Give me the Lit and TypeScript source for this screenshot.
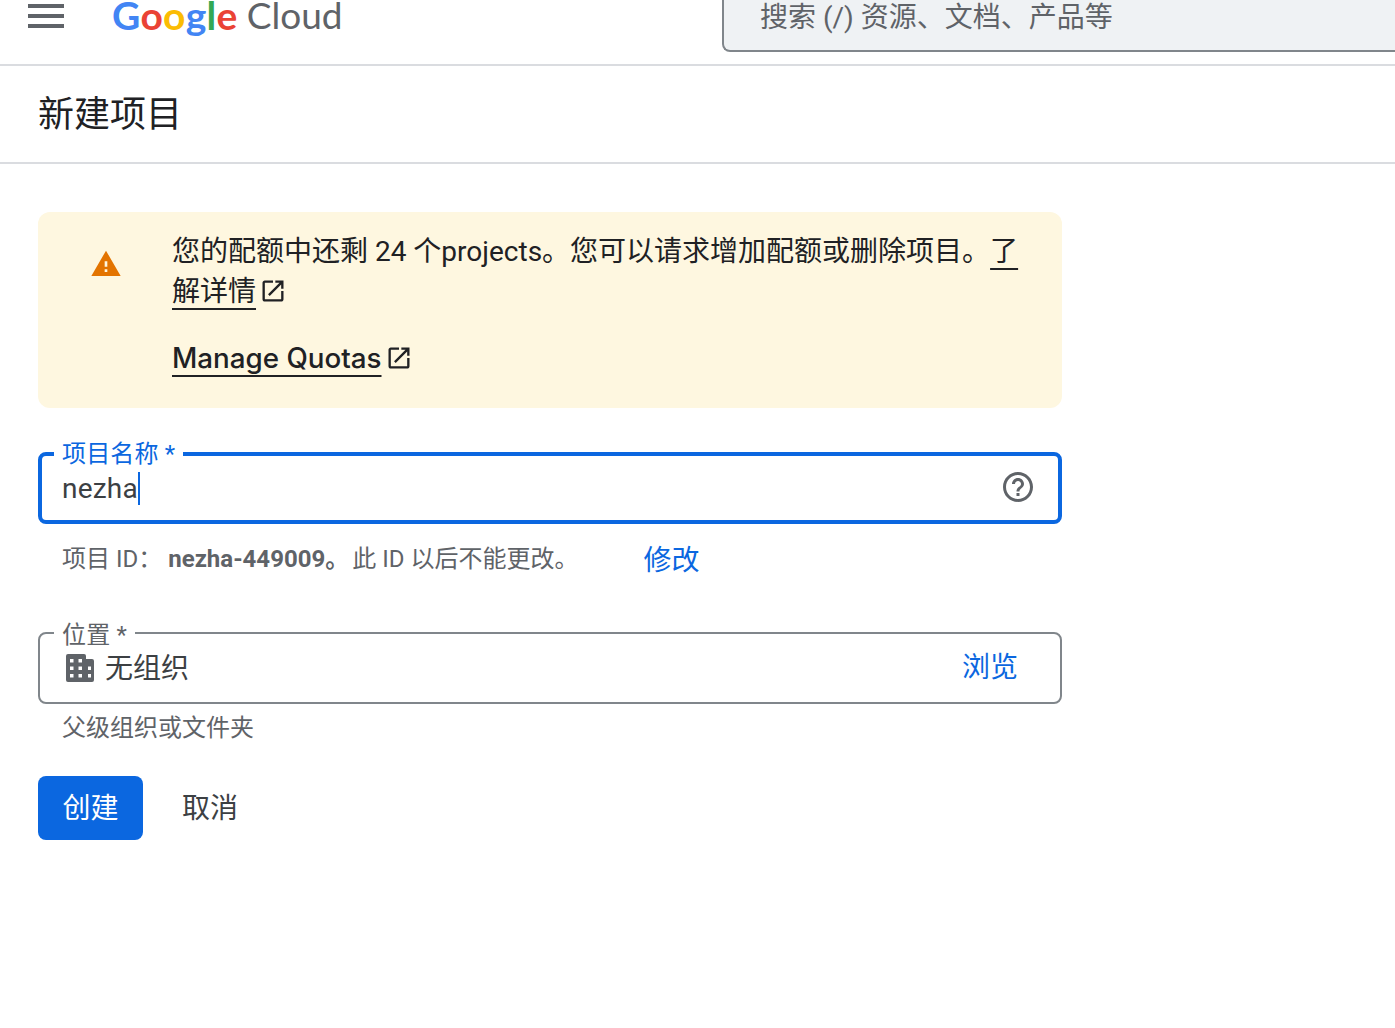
import { LitElement, html, css, svg } from 'lit';
import { customElement } from 'lit/decorators.js';

const openNew = svg`<path d="M19 19H5V5h7V3H5c-1.11 0-2 .9-2 2v14c0 1.1.89 2 2 2h14c1.1 0 2-.9 2-2v-7h-2v7zM14 3v2h3.59l-9.83 9.83 1.41 1.41L19 6.41V10h2V3h-7z"/>`;

@customElement('app-root')
export class AppRoot extends LitElement {
  static styles = css`
    :host {
      display: block;
      min-height: 1028px;
      background: #fff;
      overflow: hidden;
      font-family: Roboto, "Noto Sans CJK SC", sans-serif;
      color: #202124;
    }
    svg {
      display: block;
      fill: currentColor;
      flex: none;
    }
    header {
      display: flex;
      height: 64px;
      border-bottom: 2px solid #dadce0;
      overflow: hidden;
    }
    .menu {
      display: flex;
      flex-direction: column;
      gap: 6px;
      width: 36px;
      margin: 4px 0 0 28px;
    }
    .menu i {
      display: block;
      height: 4px;
      background: #5f6368;
    }
    .logo {
      display: flex;
      gap: 9px;
      width: 610px;
      margin: -11px 0 0 48px;
      font-family: Lato, sans-serif;
      font-size: 39px;
      line-height: 52px;
    }
    .logo .word {
      font-weight: 700;
      letter-spacing: 0.3px;
    }
    .logo .cloud {
      color: #5f6368;
      font-size: 37px;
    }
    .b { color: #4285f4; }
    .r { color: #ea4335; }
    .y { color: #fbbc04; }
    .g { color: #34a853; }
    .search {
      flex: 1;
      height: 62px;
      margin-top: -10px;
      padding-left: 36px;
      box-sizing: border-box;
      background: #eff2f4;
      border: 2px solid #80868b;
      border-radius: 8px 0 0 8px;
      border-right: 0;
      color: #5f6368;
      font-size: 28px;
      line-height: 52px;
    }
    .title {
      height: 96px;
      padding-left: 38px;
      border-bottom: 2px solid #dadce0;
      font-size: 36px;
      line-height: 98px;
    }
    main {
      width: 1024px;
      margin: 48px 0 0 38px;
    }
    .banner {
      display: flex;
      gap: 50px;
      height: 196px;
      box-sizing: border-box;
      padding: 20px 40px 0 52px;
      background: #fef7e0;
      border-radius: 12px;
      font-size: 28px;
      line-height: 40px;
    }
    .banner .warn {
      margin-top: 16px;
      color: #e37400;
    }
    .banner p {
      margin: 0 0 26px;
    }
    .link {
      text-decoration: underline;
      text-decoration-thickness: 2px;
      text-underline-offset: 7px;
      text-decoration-skip-ink: none;
    }
    .ext {
      display: inline-block;
      vertical-align: -4px;
      margin-left: 3px;
    }
    .quotas {
      font-family: Inter, sans-serif;
      font-weight: 500;
      font-size: 27.75px;
    }
    .field {
      position: relative;
      display: flex;
      align-items: center;
      height: 72px;
      box-sizing: border-box;
      border-radius: 8px;
      padding: 0 42px 0 22px;
      border: 2px solid #80868b;
      margin-top: 44px;
      font-size: 28px;
      color: #3c4043;
    }
    .field.focus {
      border: 4px solid #0b67e0;
      padding: 0 24px 0 20px;
    }
    .field label {
      position: absolute;
      left: 14px;
      top: -11px;
      padding: 0 8px;
      background: #fff;
      font-size: 24px;
      line-height: 24px;
      letter-spacing: 0.15px;
      color: #5f6368;
    }
    .field.focus label {
      left: 12px;
      top: -14px;
      color: #0b67e0;
    }
    .value {
      letter-spacing: 0.2px;
    }
    .caret {
      width: 2px;
      height: 33px;
      background: #0b67e0;
    }
    .grow {
      flex: 1;
    }
    .help {
      color: #5f6368;
      margin: 0 -2px 2px 0;
    }
    .blue {
      color: #0b67e0;
    }
    .hint {
      padding-left: 24px;
      font-size: 24px;
      color: #5f6368;
    }
    .idrow {
      display: flex;
      align-items: center;
      height: 70px;
      box-sizing: border-box;
      padding-bottom: 6px;
    }
    .idrow b {
      font-weight: 700;
      margin: 0 3px 0 6px;
    }
    .idrow .change {
      margin: 4px 0 0 65px;
      font-size: 28px;
      color: #0b67e0;
    }
    .idrow + .field {
      margin-top: 38px;
    }
    .field .org {
      margin: 0 11px 0 4px;
      color: #5f6368;
    }
    .field .name {
      margin-bottom: 4px;
    }
    .field .browse {
      margin-bottom: 6px;
    }
    .locnote {
      margin-top: 8px;
      line-height: 32px;
    }
    .actions {
      display: flex;
      align-items: center;
      gap: 39px;
      margin-top: 32px;
      font-size: 28px;
    }
    .create {
      width: 105px;
      height: 64px;
      border-radius: 8px;
      background: #0b67e0;
      color: #fff;
      text-align: center;
      line-height: 66px;
    }
    .cancel {
      color: #3c4043;
      margin-bottom: 4px;
    }
  `;

  render() {
    return html`
      <header>
        <div class="menu"><i></i><i></i><i></i></div>
        <div class="logo">
          <span class="word"><span class="b">G</span><span class="r">o</span><span class="y">o</span><span class="b">g</span><span class="g">l</span><span class="r">e</span></span>
          <span class="cloud">Cloud</span>
        </div>
        <div class="search">搜索 (/) 资源、文档、产品等</div>
      </header>
      <div class="title">新建项目</div>
      <main>
        <section class="banner">
          <svg class="warn" width="32" height="32" viewBox="0 0 24 24"><path d="M1 21h22L12 2 1 21zm12-3h-2v-2h2v2zm0-4h-2v-4h2v4z"/></svg>
          <div>
            <p>您的配额中还剩 24 个projects。您可以请求增加配额或删除项目。<span class="link">了解详情</span><svg class="ext" width="28" height="28" viewBox="0 0 24 24">${openNew}</svg></p>
            <div class="quotas"><span class="link">Manage Quotas</span><svg class="ext" width="28" height="28" viewBox="0 0 24 24">${openNew}</svg></div>
          </div>
        </section>
        <div class="field focus">
          <label>项目名称 *</label>
          <span class="value">nezha</span><span class="caret"></span>
          <span class="grow"></span>
          <svg class="help" width="36" height="36" viewBox="0 0 24 24"><path d="M11 18h2v-2h-2v2zm1-16C6.48 2 2 6.48 2 12s4.48 10 10 10 10-4.48 10-10S17.52 2 12 2zm0 18c-4.41 0-8-3.59-8-8s3.59-8 8-8 8 3.59 8 8-3.59 8-8 8zm0-14c-2.21 0-4 1.79-4 4h2c0-1.1.9-2 2-2s2 .9 2 2c0 2-3 1.75-3 5h2c0-2.25 3-2.5 3-5 0-2.21-1.79-4-4-4z"/></svg>
        </div>
        <div class="hint idrow">
          <span>项目 ID：</span><b>nezha-449009。</b><span>此 ID 以后不能更改。</span>
          <span class="change">修改</span>
        </div>
        <div class="field">
          <label>位置 *</label>
          <svg class="org" width="28" height="28" viewBox="0 0 28 28"><path fill-rule="evenodd" d="M2 0H18a2 2 0 0 1 2 2V5H26a2 2 0 0 1 2 2V26a2 2 0 0 1-2 2H2a2 2 0 0 1-2-2V2a2 2 0 0 1 2-2zM4 5v3.5h3.5V5zM12.5 5v3.5H16V5zM4 12.5V16h3.5V12.5zM12.5 12.5V16H16V12.5zM4 20v3.5h3.5V20zM12.5 20v3.5H16V20zM22 12.5V16h3v-3.5zM22 20v3.5h3V20z"/></svg>
          <span class="grow name">无组织</span>
          <span class="blue browse">浏览</span>
        </div>
        <div class="hint locnote">父级组织或文件夹</div>
        <div class="actions">
          <div class="create">创建</div>
          <div class="cancel">取消</div>
        </div>
      </main>
    `;
  }
}
